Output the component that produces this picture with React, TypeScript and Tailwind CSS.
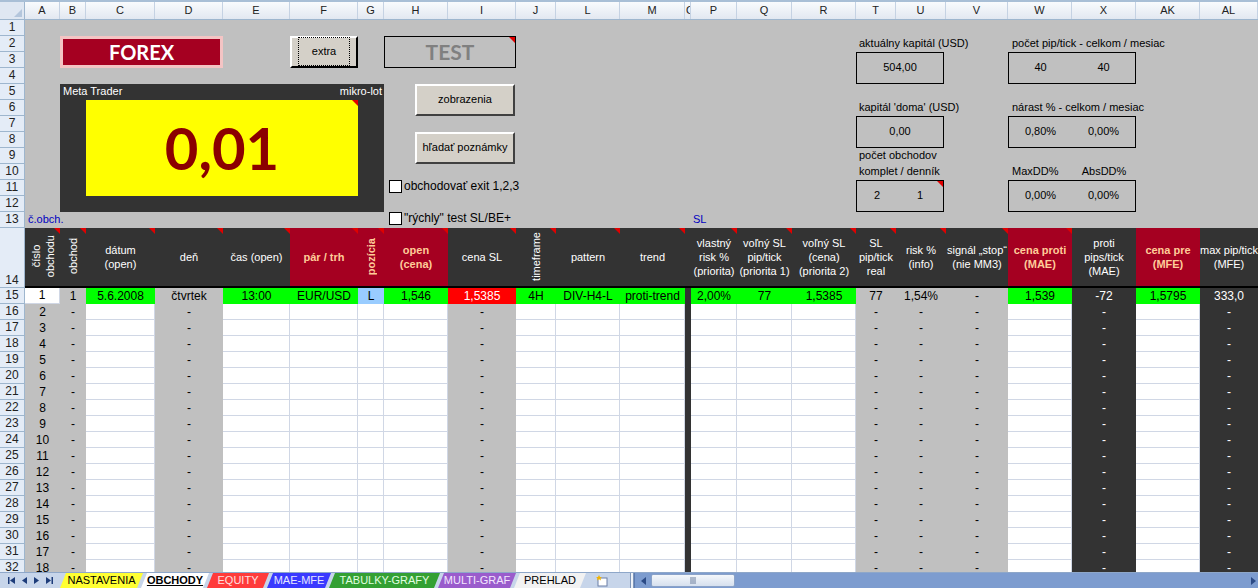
import React from 'react'

const GRID =
  'grid grid-cols-[35px_26px_69px_68px_67px_68px_26px_64px_68px_40px_64px_65px_6px_46px_55px_64px_40px_50px_62px_64px_64px_64px_58px]'

const LETTERS = ['A', 'B', 'C', 'D', 'E', 'F', 'G', 'H', 'I', 'J', 'L', 'M', 'O', 'P', 'Q', 'R', 'T', 'U', 'V', 'W', 'X', 'AK', 'AL']

type Kind = 'w' | 'g' | 'd' | 'green' | 'blue' | 'red'

const CELL_BG: Record<Kind, string> = {
  w: 'bg-white border-r border-b border-[#d0d7e5] text-black',
  g: 'bg-[#c0c0c0] text-black',
  d: 'bg-[#333333] text-white',
  green: 'bg-[#00ff00] text-black',
  blue: 'bg-[#99ccff] text-black',
  red: 'bg-[#ff0000] text-white',
}

type Head = { lines: string[]; v?: boolean; red?: boolean; sep?: boolean; note?: boolean }

const HEAD: Head[] = [
  { lines: ['číslo', 'obchodu'], v: true, note: true },
  { lines: ['obchod'], v: true, note: true },
  { lines: ['dátum', '(open)'], note: true },
  { lines: ['deň'], note: true },
  { lines: ['čas (open)'], note: true },
  { lines: ['pár / trh'], red: true, note: true },
  { lines: ['pozícia'], v: true, red: true, note: true },
  { lines: ['open', '(cena)'], red: true, note: true },
  { lines: ['cena SL'], note: true },
  { lines: ['timeframe'], v: true, note: true },
  { lines: ['pattern'], note: true },
  { lines: ['trend'], note: true },
  { lines: [], sep: true },
  { lines: ['vlastný', 'risk %', '(priorita)'], note: true },
  { lines: ['voľný SL', 'pip/tick', '(priorita 1)'], note: true },
  { lines: ['voľný SL', '(cena)', '(priorita 2)'], note: true },
  { lines: ['SL', 'pip/tick', 'real'], note: true },
  { lines: ['risk %', '(info)'], note: true },
  { lines: ['signál „stop“', '(nie MM3)'], note: true },
  { lines: ['cena proti', '(MAE)'], red: true, note: true },
  { lines: ['proti', 'pips/tick', '(MAE)'] },
  { lines: ['cena pre', '(MFE)'], red: true },
  { lines: ['max pip/tick', '(MFE)'] },
]

const FIRST: [Kind, string][] = [
  ['w', '1'], ['g', '1'], ['green', '5.6.2008'], ['g', 'čtvrtek'], ['green', '13:00'], ['green', 'EUR/USD'],
  ['blue', 'L'], ['green', '1,546'], ['red', '1,5385'], ['green', '4H'], ['green', 'DIV-H4-L'], ['green', 'proti-trend'],
  ['d', ''], ['green', '2,00%'], ['green', '77'], ['green', '1,5385'], ['g', '77'], ['g', '1,54%'], ['g', '-'],
  ['green', '1,539'], ['d', '-72'], ['green', '1,5795'], ['d', '333,0'],
]

function restRow(n: number): [Kind, string][] {
  return [
    ['g', String(n)], ['g', '-'], ['w', ''], ['g', '-'], ['w', ''], ['w', ''], ['w', ''], ['w', ''], ['g', '-'],
    ['w', ''], ['w', ''], ['w', ''], ['d', ''], ['w', ''], ['w', ''], ['w', ''], ['g', '-'], ['g', '-'], ['g', '-'],
    ['w', ''], ['d', '-'], ['w', ''], ['d', '-'],
  ]
}

const Note = () => (
  <span className="absolute top-0 right-0 w-0 h-0 border-l-[6px] border-l-transparent border-t-[6px] border-t-[#e00000]" />
)

const BTN =
  'flex items-center justify-center bg-[#d4d0c8] border-2 border-t-white border-l-white border-b-[#404040] border-r-[#404040] text-[11px] text-black'

function Check({ label }: { label: string }) {
  return (
    <>
      <span className="w-[13px] h-[13px] bg-white border border-black shrink-0" />
      <span className="text-[12px] ml-[2px] whitespace-nowrap">{label}</span>
    </>
  )
}

function TopArea() {
  return (
    <div className={`${GRID} grid-rows-[repeat(13,16px)] bg-[#c0c0c0] text-[11px] text-black`}>
      {/* FOREX */}
      <div className="col-start-2 col-end-5 row-start-2 row-end-4 border-[3px] border-[#f4c4c4] bg-[#a50021] flex items-center justify-center">
        <span className="font-['Lato',sans-serif] font-bold text-[20px] text-white">FOREX</span>
      </div>

      <div className={`col-start-6 col-end-7 row-start-2 row-end-4 ${BTN} border-b-black border-r-black`}>
        <span className="border border-dotted border-black px-[13px] py-[5px]">extra</span>
      </div>

      <div className="col-start-8 col-end-10 row-start-2 row-end-4 relative border border-black flex items-center justify-center">
        <span className="font-['Lato',sans-serif] font-bold text-[21px] text-[#808080]">TEST</span>
        <Note />
      </div>

      {/* Meta Trader panel */}
      <div className="col-start-2 col-end-8 row-start-5 row-end-13 bg-[#333333]" />
      <div className="col-start-2 col-end-5 row-start-5 flex items-center pl-[3px] text-white text-[11px]">Meta Trader</div>
      <div className="col-start-6 col-end-8 row-start-5 flex items-center justify-end pr-[2px] text-white text-[11px]">mikro-lot</div>
      <div className="col-start-3 col-end-7 row-start-6 row-end-12 bg-[#ffff00] relative flex items-center justify-center">
        <span className="font-['Lato',sans-serif] font-bold text-[58px] leading-none text-[#8b0000]">0,01</span>
        <Note />
      </div>

      <div className={`col-start-8 col-end-10 row-start-5 row-end-7 ml-[31px] w-[100px] ${BTN}`}>zobrazenia</div>
      <div className={`col-start-8 col-end-10 row-start-8 row-end-10 ml-[31px] w-[100px] ${BTN}`}>hľadať poznámky</div>

      <div className="col-start-8 col-end-12 row-start-11 flex items-center pl-[5px] -mt-[3px]">
        <Check label="obchodovať exit 1,2,3" />
      </div>
      <div className="col-start-8 col-end-12 row-start-13 flex items-center pl-[5px] -mt-[3px]">
        <Check label={'"rýchly" test SL/BE+'} />
      </div>

      <div className="col-start-1 col-end-3 row-start-13 flex items-center pl-[3px] text-[#0000c0]">č.obch.</div>
      <div className="col-start-14 col-end-15 row-start-13 flex items-center pl-[2px] text-[#0000c0]">SL</div>

      {/* right panel */}
      <div className="col-start-17 col-end-20 row-start-2 flex items-center pl-[3px] whitespace-nowrap">aktuálny kapitál (USD)</div>
      <div className="col-start-17 col-end-19 row-start-3 row-end-5 w-[88px] border border-black flex items-center justify-center">504,00</div>
      <div className="col-start-20 col-end-24 row-start-2 flex items-center pl-[4px] whitespace-nowrap">počet pip/tick - celkom / mesiac</div>
      <div className="col-start-20 col-end-22 row-start-3 row-end-5 border border-black grid grid-cols-2 items-center text-center">
        <span>40</span>
        <span>40</span>
      </div>

      <div className="col-start-17 col-end-20 row-start-6 flex items-center pl-[3px] whitespace-nowrap">kapitál 'doma' (USD)</div>
      <div className="col-start-17 col-end-19 row-start-7 row-end-9 w-[88px] border border-black flex items-center justify-center">0,00</div>
      <div className="col-start-20 col-end-24 row-start-6 flex items-center pl-[4px] whitespace-nowrap">nárast % - celkom / mesiac</div>
      <div className="col-start-20 col-end-22 row-start-7 row-end-9 border border-black grid grid-cols-2 items-center text-center">
        <span>0,80%</span>
        <span>0,00%</span>
      </div>

      <div className="col-start-17 col-end-20 row-start-9 flex items-center pl-[3px] whitespace-nowrap">počet obchodov</div>
      <div className="col-start-17 col-end-20 row-start-10 flex items-center pl-[3px] whitespace-nowrap">komplet / denník</div>
      <div className="col-start-17 col-end-19 row-start-11 row-end-13 w-[88px] relative border border-black grid grid-cols-[40px_1fr] items-center text-center">
        <span>2</span>
        <span>1</span>
        <Note />
      </div>
      <div className="col-start-20 col-end-21 row-start-10 flex items-center pl-[4px]">MaxDD%</div>
      <div className="col-start-21 col-end-22 row-start-10 flex items-center justify-center">AbsDD%</div>
      <div className="col-start-20 col-end-22 row-start-11 row-end-13 border border-black grid grid-cols-2 items-center text-center">
        <span>0,00%</span>
        <span>0,00%</span>
      </div>
    </div>
  )
}

function HeaderRow() {
  return (
    <div className={`${GRID} h-[60px] bg-[#333333] border-b-2 border-black`}>
      {HEAD.map((h, i) => (
        <div
          key={i}
          className={`relative flex items-center justify-center text-center text-[11px] leading-[14px] overflow-hidden ${
            h.red ? 'bg-[#a50021] text-[#ffcc99] font-bold' : 'text-white'
          }`}
        >
          {h.v ? (
            <span className="[writing-mode:vertical-rl] rotate-180 whitespace-nowrap">
              {h.lines.map((l, j) => (
                <span key={j} className="block">{l}</span>
              ))}
            </span>
          ) : (
            <span className="whitespace-nowrap">
              {h.lines.map((l, j) => (
                <span key={j} className="block">{l}</span>
              ))}
            </span>
          )}
          {h.note && <Note />}
        </div>
      ))}
    </div>
  )
}

function DataRow({ cells }: { cells: [Kind, string][] }) {
  return (
    <div className={`${GRID} h-[16px]`}>
      {cells.map(([k, t], i) => (
        <div key={i} className={`flex items-center justify-center text-[12px] leading-none overflow-hidden whitespace-nowrap ${CELL_BG[k]}`}>
          {t}
        </div>
      ))}
    </div>
  )
}

function ColHeader() {
  return (
    <div className="flex h-[20px] border-t-2 border-[#a9bfd6] bg-gradient-to-b from-[#f9fbfd] to-[#e2e8f1] border-b border-b-[#9eb6ce]">
      <div className="w-[25px] shrink-0 relative border-r border-[#9eb6ce] bg-[#dfe7f2]">
        <span className="absolute right-[2px] bottom-[2px] w-0 h-0 border-l-[8px] border-l-transparent border-b-[8px] border-b-[#b4c6dc]" />
      </div>
      <div className={`${GRID} flex-1`}>
        {LETTERS.map(l => (
          <div
            key={l}
            className={`border-r border-[#c5d2e3] flex items-center text-[11px] text-[#222] overflow-hidden ${
              l === 'O' ? 'justify-start pl-[1px]' : 'justify-center'
            }`}
          >
            {l}
          </div>
        ))}
      </div>
    </div>
  )
}

function RowHeaders() {
  const nums = Array.from({ length: 32 }, (_, i) => i + 1)
  return (
    <div className="w-[25px] shrink-0 flex flex-col bg-[#e4ecf7] border-r border-[#9eb6ce]">
      {nums.map(n => (
        <div
          key={n}
          className={`border-b border-[#9eb6ce] flex justify-center text-[12px] leading-none text-[#222] ${
            n === 14 ? 'h-[60px] items-end pb-[1px]' : 'h-[16px] items-center'
          }`}
        >
          {n}
        </div>
      ))}
    </div>
  )
}

const TABS = [
  { t: 'NASTAVENIA', c: 'w-[83px] bg-[#ffff33] text-black' },
  { t: 'OBCHODY', c: 'w-[68px] bg-white text-black font-bold underline' },
  { t: 'EQUITY', c: 'w-[62px] bg-[#ff3b3b] text-[#ffe0e0]' },
  { t: 'MAE-MFE', c: 'w-[64px] bg-[#3a3aff] text-[#e6e6ff]' },
  { t: 'TABULKY-GRAFY', c: 'w-[111px] bg-[#33a033] text-[#e0ffe0]' },
  { t: 'MULTI-GRAF', c: 'w-[78px] bg-[#9a5ccc] text-[#f3e6ff]' },
  { t: 'PREHLAD', c: 'w-[72px] bg-[#f2f2f2] text-black' },
]

function TabBar() {
  return (
    <div className="h-[16px] flex bg-[#c7d5ea] border-t border-[#8ea7c9]">
      <div className="w-[60px] shrink-0 flex items-center justify-around px-[4px] text-[#1d3c7a]">
        <svg width="9" height="9" viewBox="0 0 9 9"><rect x="1" y="1" width="1.5" height="7" fill="currentColor" /><path d="M8 1 L3 4.5 L8 8 Z" fill="currentColor" /></svg>
        <svg width="7" height="9" viewBox="0 0 7 9"><path d="M6 1 L1 4.5 L6 8 Z" fill="currentColor" /></svg>
        <svg width="7" height="9" viewBox="0 0 7 9"><path d="M1 1 L6 4.5 L1 8 Z" fill="currentColor" /></svg>
        <svg width="9" height="9" viewBox="0 0 9 9"><path d="M1 1 L6 4.5 L1 8 Z" fill="currentColor" /><rect x="6.5" y="1" width="1.5" height="7" fill="currentColor" /></svg>
      </div>
      {TABS.map(tab => (
        <div
          key={tab.t}
          className={`shrink-0 h-full flex items-center justify-center text-[11px] leading-none [clip-path:polygon(6px_0,100%_0,calc(100%-6px)_100%,0_100%)] -mr-[2px] ${tab.c}`}
        >
          {tab.t}
        </div>
      ))}
      <div className="w-[28px] shrink-0 flex items-center justify-center ml-[4px]">
        <svg width="14" height="12" viewBox="0 0 14 12">
          <rect x="3" y="3" width="9" height="8" fill="#fff" stroke="#6b7fa6" />
          <path d="M4 0 L5 2 L7 2 L5.5 3.3 L6 5.5 L4 4.2 L2 5.5 L2.5 3.3 L1 2 L3 2 Z" fill="#f2b400" />
        </svg>
      </div>
      <div className="w-[14px] shrink-0" />
      <div className="w-[4px] shrink-0 bg-[#eef2f8] border-x border-[#7e95b9]" />
      <div className="flex-1 flex items-center bg-[#7d9ccf] border-l border-[#5c7bb0]">
        <div className="w-[16px] h-full flex items-center justify-center">
          <svg width="5" height="8" viewBox="0 0 5 8"><path d="M5 0 L0 4 L5 8 Z" fill="#2c4b86" /></svg>
        </div>
        <div className="w-[84px] h-[13px] rounded-[2px] border border-[#8aa2c8] bg-gradient-to-b from-[#f4f7fb] to-[#d6e0ee] flex items-center justify-center">
          <svg width="7" height="7" viewBox="0 0 7 7"><path d="M1 0V7M3 0V7M5 0V7" stroke="#6d7f9e" strokeWidth="1" /></svg>
        </div>
        <div className="flex-1" />
        <div className="w-[10px] h-full flex items-center justify-center">
          <svg width="5" height="8" viewBox="0 0 5 8"><path d="M0 0 L5 4 L0 8 Z" fill="#2c4b86" /></svg>
        </div>
      </div>
    </div>
  )
}

export default function App() {
  const rows = Array.from({ length: 17 }, (_, i) => i + 2)
  return (
    <div className="w-[1258px] h-[588px] overflow-hidden flex flex-col bg-white font-['Liberation_Sans',Arial,sans-serif]">
      <div className="h-[572px] overflow-hidden flex flex-col">
        <ColHeader />
        <div className="flex">
          <RowHeaders />
          <div className="flex flex-col w-[1233px]">
            <TopArea />
            <HeaderRow />
            <DataRow cells={FIRST} />
            {rows.map(n => (
              <DataRow key={n} cells={restRow(n)} />
            ))}
          </div>
        </div>
      </div>
      <TabBar />
    </div>
  )
}
